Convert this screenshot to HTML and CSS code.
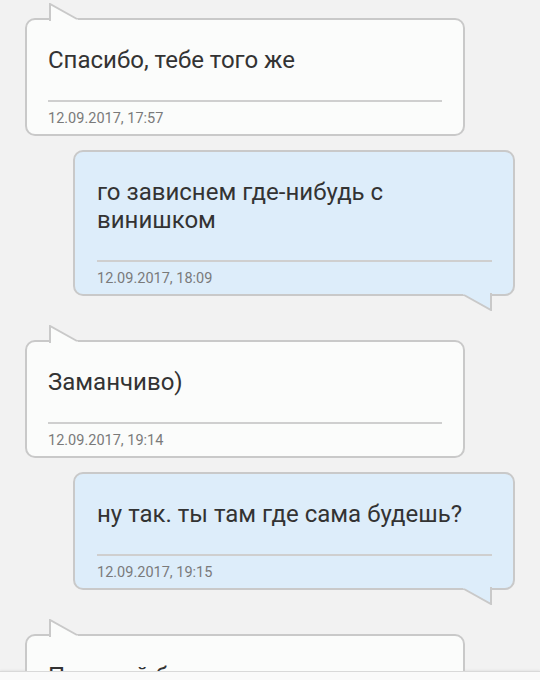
FILE: index.html
```html
<!DOCTYPE html>
<html lang="ru">
<head>
    <meta charset="UTF-8">
    <meta name="viewport" content="width=device-width, initial-scale=1.0">
    <title>Чат</title>
    <link rel="stylesheet" href="styles.css">
</head>
<body>
    <div class="screen">
        <div class="chat">
            <div class="msg in">
                <div class="bubble">
                    <svg class="tail" width="30" height="18" viewBox="0 0 30 18">
                        <polygon class="tail-fill" points="1,1 28,16 30,18 1,18"/>
                        <polyline class="tail-line" points="1,18 1,1 28,16"/>
                    </svg>
                    <p class="text">Спасибо, тебе того же</p>
                    <div class="time">12.09.2017, 17:57</div>
                </div>
            </div>

            <div class="msg out">
                <div class="bubble">
                    <svg class="tail" width="30" height="18" viewBox="0 0 30 18">
                        <polygon class="tail-fill" points="1,1 28,16 30,18 1,18"/>
                        <polyline class="tail-line" points="1,18 1,1 28,16"/>
                    </svg>
                    <p class="text">го зависнем где-нибудь с винишком</p>
                    <div class="time">12.09.2017, 18:09</div>
                </div>
            </div>

            <div class="msg in">
                <div class="bubble">
                    <svg class="tail" width="30" height="18" viewBox="0 0 30 18">
                        <polygon class="tail-fill" points="1,1 28,16 30,18 1,18"/>
                        <polyline class="tail-line" points="1,18 1,1 28,16"/>
                    </svg>
                    <p class="text">Заманчиво)</p>
                    <div class="time">12.09.2017, 19:14</div>
                </div>
            </div>

            <div class="msg out">
                <div class="bubble">
                    <svg class="tail" width="30" height="18" viewBox="0 0 30 18">
                        <polygon class="tail-fill" points="1,1 28,16 30,18 1,18"/>
                        <polyline class="tail-line" points="1,18 1,1 28,16"/>
                    </svg>
                    <p class="text">ну так. ты там где сама будешь?</p>
                    <div class="time">12.09.2017, 19:15</div>
                </div>
            </div>

            <div class="msg in">
                <div class="bubble">
                    <svg class="tail" width="30" height="18" viewBox="0 0 30 18">
                        <polygon class="tail-fill" points="1,1 28,16 30,18 1,18"/>
                        <polyline class="tail-line" points="1,18 1,1 28,16"/>
                    </svg>
                    <p class="text">Пожалуй буду дома</p>
                    <div class="time">12.09.2017, 19:20</div>
                </div>
            </div>
        </div>
        <div class="bottom-bar"></div>
    </div>
</body>
</html>
```

FILE: styles.css
```css
* {
    margin: 0;
    padding: 0;
    box-sizing: border-box;
}

body {
    background-color: #f2f2f2;
    font-family: Roboto, 'Liberation Sans', sans-serif;
    color: #333333;
}

.screen {
    height: 680px;
    display: flex;
    flex-direction: column;
    overflow: hidden;
}

.chat {
    flex: 1;
    overflow: hidden;
    padding: 3px 25px 0;
    display: flex;
    flex-direction: column;
}

.msg + .msg {
    margin-top: 14px;
}

.msg.in {
    padding-top: 15px;
    margin-right: 50px;
}

.msg.out {
    padding-bottom: 15px;
    margin-left: 48px;
}

.bubble {
    position: relative;
    border: 2px solid #c9c9c9;
    border-radius: 10px;
    padding: 26px 21px 6px;
}

.in .bubble {
    background-color: #fbfcfb;
}

.out .bubble {
    background-color: #ddedfa;
    padding-left: 22px;
}

/* tail sits over the bubble border */
.tail {
    position: absolute;
    display: block;
}

.in .tail {
    top: -17px;
    left: 22px;
}

.out .tail {
    bottom: -17px;
    right: 21px;
    transform: rotate(180deg);
}

.tail-line {
    fill: none;
    stroke: #c9c9c9;
    stroke-width: 2;
}

.in .tail-fill {
    fill: #fbfcfb;
}

.out .tail-fill {
    fill: #ddedfa;
}

.text {
    font-size: 24px;
    line-height: 28px;
    margin-bottom: 26px;
    color: #333333;
}

.time {
    border-top: 2px solid #cfcfcf;
    padding-top: 8px;
    font-size: 14.5px;
    line-height: 18px;
    color: #7a7a7a;
}

.bottom-bar {
    height: 9px;
    flex-shrink: 0;
    background-color: #fafafa;
    border-top: 1px solid #d9d9d9;
    box-shadow: 0 -1px 2px rgba(0, 0, 0, 0.06);
}
```
